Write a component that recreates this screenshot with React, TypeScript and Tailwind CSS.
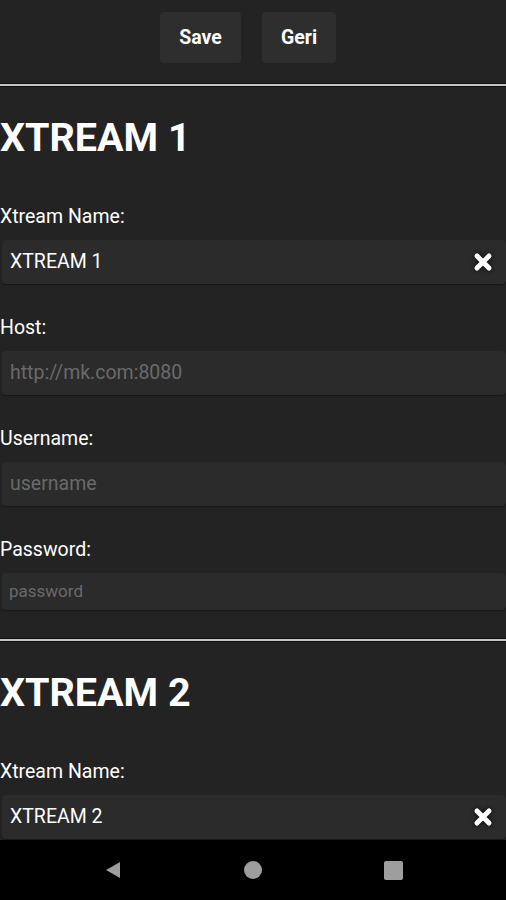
import React from "react";

const XIcon = () => (
  <svg width="22" height="22" viewBox="0 0 22 22" className="drop-shadow-[0_0_2px_rgba(0,0,0,0.9)]">
    <path d="M5 5 L17 17 M17 5 L5 17" stroke="#ffffff" strokeWidth="5" strokeLinecap="round" fill="none" />
  </svg>
);

const Sep = () => (
  <div className="flex flex-col">
    <div className="h-[1px] bg-[#111111]" />
    <div className="h-[2px] bg-[#c4c4c4]" />
    <div className="h-[1px] bg-[#111111]" />
  </div>
);

const Field = ({ label, value, placeholder, clear, small }: { label: string; value?: string; placeholder?: string; clear?: boolean; small?: boolean }) => (
  <div className="flex flex-col">
    <div className="h-[24px] leading-[24px] text-[19.5px] text-white mt-[32px]">{label}</div>
    <div className={`mt-[11px] ml-[2px] rounded-[4px] bg-[#2b2b2b] flex items-center justify-between pl-[8px] pr-[12px] shadow-[0_1px_1px_rgba(0,0,0,0.35)] ${small ? "h-[37px]" : "h-[44px]"}`}>
      {value ? (
        <span className="text-[19.5px] text-white">{value}</span>
      ) : (
        <span className={`${small ? "text-[17px] -ml-[1px]" : "text-[19.5px]"} text-[#6a6a6a]`}>{placeholder}</span>
      )}
      {clear && <XIcon />}
    </div>
  </div>
);

const Heading = ({ children }: { children: React.ReactNode }) => (
  <div className="h-[86px] flex items-center">
    <h1 className="text-[39.5px] font-bold text-white leading-none mt-[16px]">{children}</h1>
  </div>
);

export default function App() {
  return (
    <div className="w-[506px] h-[900px] bg-[#232323] overflow-hidden flex flex-col relative" style={{ fontFamily: "Roboto, 'Noto Sans', sans-serif" }}>
      <div className="flex-1 overflow-hidden flex flex-col">
        <div className="h-[83px] flex justify-start gap-[21px] pt-[12px] pl-[160px]">
          <button className="w-[81px] h-[51px] rounded-[4px] bg-[#2e2e2e] text-white font-bold text-[19.5px]">Save</button>
          <button className="w-[74px] h-[51px] rounded-[4px] bg-[#2e2e2e] text-white font-bold text-[19.5px]">Geri</button>
        </div>
        <Sep />
        <Heading>XTREAM 1</Heading>
        <div>
          <Field label="Xtream Name:" value="XTREAM 1" clear />
          <Field label="Host:" placeholder="http://mk.com:8080" />
          <Field label="Username:" placeholder="username" />
          <Field label="Password:" placeholder="password" small />
        </div>
        <div className="h-[28px]" />
        <Sep />
        <Heading>XTREAM 2</Heading>
        <div>
          <Field label="Xtream Name:" value="XTREAM 2" clear />
        </div>
      </div>
      <div className="absolute left-0 right-0 bottom-0 h-[60px] bg-black flex items-center justify-center">
        <div className="w-[140px] flex justify-center">
          <svg width="20" height="20" viewBox="0 0 20 20"><path d="M3 10 L17 2 L17 18 Z" fill="#9e9e9e" /></svg>
        </div>
        <div className="w-[140px] flex justify-center">
          <div className="w-[18px] h-[18px] rounded-full bg-[#9e9e9e]" />
        </div>
        <div className="w-[140px] flex justify-center">
          <div className="w-[19px] h-[19px] rounded-[2px] bg-[#9e9e9e]" />
        </div>
      </div>
    </div>
  );
}
